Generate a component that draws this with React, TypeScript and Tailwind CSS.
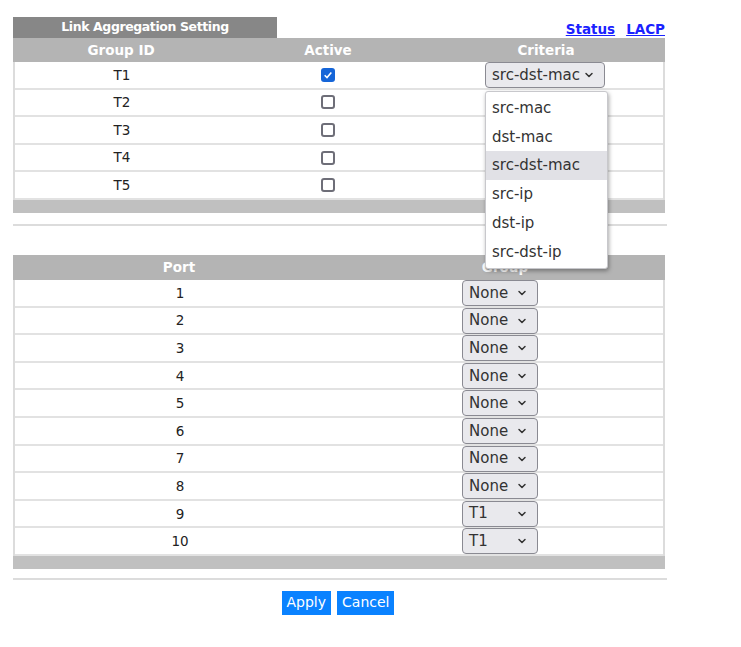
import { ChevronDown } from 'lucide-react';

const groups = ['T1', 'T2', 'T3', 'T4', 'T5'];
const ports = [
  { port: 1, group: 'None' },
  { port: 2, group: 'None' },
  { port: 3, group: 'None' },
  { port: 4, group: 'None' },
  { port: 5, group: 'None' },
  { port: 6, group: 'None' },
  { port: 7, group: 'None' },
  { port: 8, group: 'None' },
  { port: 9, group: 'T1' },
  { port: 10, group: 'T1' },
];
const criteria = ['src-mac', 'dst-mac', 'src-dst-mac', 'src-ip', 'dst-ip', 'src-dst-ip'];

function Checkbox({ checked }: { checked?: boolean }) {
  if (checked) {
    return (
      <span className="w-[14px] h-[14px] rounded-[3px] bg-[#1565d8] flex items-center justify-center">
        <svg viewBox="0 0 12 12" className="w-[10px] h-[10px]">
          <path d="M2 6.3 L4.8 9 L10 3" fill="none" stroke="white" strokeWidth="1.9" />
        </svg>
      </span>
    );
  }
  return <span className="w-[14px] h-[14px] rounded-[3px] border-2 border-[#6e6e78] bg-white" />;
}

function Select({ value, w }: { value: string; w: string }) {
  return (
    <div
      className={`${w} h-[26px] flex items-center justify-between pl-[6px] pr-[9px] rounded-[4px] border border-[#8a8a92] bg-[#e9e9ed] text-[15px] text-[#333]`}
    >
      <span>{value}</span>
      <ChevronDown size={12} strokeWidth={3} className="text-[#333]" />
    </div>
  );
}

export default function App() {
  return (
    <div
      className="w-[741px] h-[647px] bg-white pt-[17px] pl-[13px] text-[#222]"
      style={{ fontFamily: '"DejaVu Sans", sans-serif' }}
    >
      <div className="w-[652px]">
        {/* Title + links */}
        <div className="h-[21px] flex items-start justify-between">
          <div className="w-[264px] h-[21px] bg-[#878787] text-white font-bold text-[12.5px] flex items-center justify-center tracking-[-0.4px]">
            Link Aggregation Setting
          </div>
          <div className="flex gap-[11px] font-bold text-[13.5px] leading-[20px] text-[#1a22ff] mt-[2px]">
            <span className="underline">Status</span>
            <span className="underline">LACP</span>
          </div>
        </div>

        {/* Group table */}
        <div className="relative">
          <div className="h-[24px] bg-[#b4b4b4] text-white font-bold text-[13.5px] grid grid-cols-[216px_198px_238px] items-center text-center">
            <span>Group ID</span>
            <span>Active</span>
            <span>Criteria</span>
          </div>
          <div className="border-l-2 border-r-2 border-[#dcdcdc]">
            {groups.map((g, i) => (
              <div
                key={g}
                className="h-[27.6px] grid grid-cols-[214px_198px_236px] items-center text-center text-[13.5px] border-b-2 border-[#e2e2e2]"
              >
                <span>{g}</span>
                <span className="flex justify-center">
                  <Checkbox checked={i === 0} />
                </span>
                <span className="flex justify-center">
                  {i === 0 && <Select value="src-dst-mac" w="w-[120px]" />}
                </span>
              </div>
            ))}
          </div>
          <div className="h-[13px] bg-[#c0c0c0]" />

          {/* open dropdown list */}
          <div className="absolute left-[472px] top-[53px] w-[123px] bg-white border border-[#c8c8cc] rounded-[3px] shadow-[1px_2px_4px_rgba(0,0,0,0.35)] py-[2px] z-10 text-[15px] text-[#333]">
            {criteria.map(c => (
              <div
                key={c}
                className={`h-[28.7px] flex items-center pl-[6px] ${c === 'src-dst-mac' ? 'bg-[#e1e1e6]' : ''}`}
              >
                {c}
              </div>
            ))}
          </div>
        </div>

        <div className="h-[2px] bg-[#dcdcdc] mt-[11px] w-[654px]" />

        {/* Port table */}
        <div className="mt-[29px]">
          <div className="h-[25px] bg-[#b4b4b4] text-white font-bold text-[13.5px] grid grid-cols-[332px_320px] items-center text-center">
            <span>Port</span>
            <span>Group</span>
          </div>
          <div className="border-l-2 border-r-2 border-[#dcdcdc]">
            {ports.map(p => (
              <div
                key={p.port}
                className="h-[27.6px] grid grid-cols-[330px_318px] items-center text-center text-[13.5px] border-b-2 border-[#e2e2e2]"
              >
                <span>{p.port}</span>
                <span className="flex justify-start pl-[117px]">
                  <Select value={p.group} w="w-[76px]" />
                </span>
              </div>
            ))}
          </div>
          <div className="h-[13px] bg-[#c0c0c0]" />
        </div>

        <div className="h-[2px] bg-[#dcdcdc] mt-[9px] w-[654px]" />

        <div className="flex justify-center gap-[6px] mt-[11px] pr-[2px] text-white text-[14px]">
          <button className="h-[24px] px-[5px] bg-[#0a82ff]">Apply</button>
          <button className="h-[24px] px-[5px] bg-[#0a82ff]">Cancel</button>
        </div>
      </div>
    </div>
  );
}
